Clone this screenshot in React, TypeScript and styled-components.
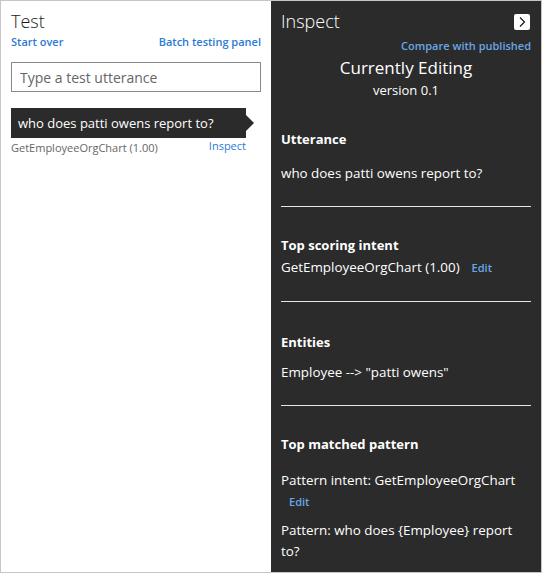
import React from "react";
import styled, { createGlobalStyle } from "styled-components";

const Global = createGlobalStyle`
  html, body { margin: 0; padding: 0; background: #fff; }
  body { font-family: "Open Sans", "Noto Sans", sans-serif; }
  * { box-sizing: border-box; }
`;

const Frame = styled.div`
  width: 542px;
  height: 573px;
  border: 1px solid #c6c6c6;
  display: flex;
  overflow: hidden;
`;

const LeftPanel = styled.section`
  width: 270px;
  background: #fff;
  padding: 8px 10px 0 10px;
  display: flex;
  flex-direction: column;
`;

const RightPanel = styled.section`
  width: 270px;
  background: #2b2b2b;
  color: #fff;
  padding: 8px 10px 0 10px;
  display: flex;
  flex-direction: column;
`;

const Title = styled.h1<{ $dark?: boolean }>`
  margin: 0;
  font-size: 18px;
  line-height: 24px;
  font-weight: 300;
  color: ${(p) => (p.$dark ? "#fff" : "#1b1b1b")};
`;

const LinkRow = styled.div`
  margin-top: 2px;
  display: flex;
  justify-content: space-between;
`;

const Link = styled.a<{ $dark?: boolean; $weight?: number }>`
  font-size: 11px;
  line-height: 14px;
  font-weight: ${(p) => p.$weight ?? 600};
  color: ${(p) => (p.$dark ? "#6aa7e6" : "#2b7bd6")};
  text-decoration: none;
  cursor: pointer;
`;

const Input = styled.input`
  margin-top: 13px;
  height: 30px;
  width: 100%;
  border: 1px solid #8a8a8a;
  padding: 0 8px;
  font-family: inherit;
  font-size: 14px;
  color: #333;
  outline: none;
  &::placeholder { color: #666; }
`;

const Bubble = styled.div`
  position: relative;
  margin-top: 16px;
  width: 235px;
  height: 30px;
  background: #2b2b2b;
  color: #fff;
  font-size: 13px;
  display: flex;
  align-items: center;
  padding-left: 7px;
  &::after {
    content: "";
    position: absolute;
    right: -8px;
    top: 7px;
    border-top: 8px solid transparent;
    border-bottom: 8px solid transparent;
    border-left: 8px solid #2b2b2b;
  }
`;

const MetaRow = styled.div`
  width: 235px;
  display: flex;
  justify-content: space-between;
  align-items: flex-start;
  margin-top: 1px;
`;

const Meta = styled.span`
  font-size: 11px;
  line-height: 14px;
  margin-top: 2px;
  color: #666;
`;

const HeaderRow = styled.div`
  display: flex;
  justify-content: space-between;
  align-items: flex-start;
`;

const CloseButton = styled.button`
  margin-top: 5px;
  margin-right: 1px;
  width: 16px;
  height: 16px;
  border: none;
  border-radius: 2px;
  background: #fff;
  padding: 0;
  display: flex;
  align-items: center;
  justify-content: center;
  cursor: pointer;
`;

const CompareRow = styled.div`
  margin-top: 6px;
  display: flex;
  justify-content: flex-end;
`;

const Centered = styled.div<{ $size: number; $lh: number; $mt: number }>`
  text-align: center;
  font-size: ${(p) => p.$size}px;
  line-height: ${(p) => p.$lh}px;
  margin-top: ${(p) => p.$mt}px;
`;

const Heading = styled.h2<{ $mt: number }>`
  margin: ${(p) => p.$mt}px 0 0 0;
  font-size: 13px;
  line-height: 20px;
  font-weight: 700;
`;

const Body = styled.p<{ $mt: number }>`
  margin: ${(p) => p.$mt}px 0 0 0;
  font-size: 13.4px;
  line-height: 21px;
`;

const InlineEdit = styled(Link)`
  margin-left: 12px;
`;

const EditLine = styled.div<{ $mt: number }>`
  margin-top: ${(p) => p.$mt}px;
  padding-left: 8px;
  line-height: 14px;
`;

const Rule = styled.hr<{ $mt: number }>`
  margin: ${(p) => p.$mt}px 0 0 0;
  border: none;
  border-top: 1px solid #e6e6e6;
  height: 0;
`;

export default function App() {
  return (
    <>
      <Global />
      <Frame>
        <LeftPanel>
          <Title>Test</Title>
          <LinkRow>
            <Link>Start over</Link>
            <Link>Batch testing panel</Link>
          </LinkRow>
          <Input placeholder="Type a test utterance" />
          <Bubble>who does patti owens report to?</Bubble>
          <MetaRow>
            <Meta>GetEmployeeOrgChart (1.00)</Meta>
            <Link $weight={400}>Inspect</Link>
          </MetaRow>
        </LeftPanel>
        <RightPanel>
          <HeaderRow>
            <Title $dark>Inspect</Title>
            <CloseButton aria-label="Close">
              <svg width="10" height="12" viewBox="0 0 10 12">
                <path d="M3 1.5 L7.5 6 L3 10.5" fill="none" stroke="#111" strokeWidth="1.1" />
              </svg>
            </CloseButton>
          </HeaderRow>
          <CompareRow>
            <Link $dark>Compare with published</Link>
          </CompareRow>
          <Centered $size={17} $lh={22} $mt={4}>Currently Editing</Centered>
          <Centered $size={13} $lh={18} $mt={2}>version 0.1</Centered>

          <Heading $mt={30}>Utterance</Heading>
          <Body $mt={14}>who does patti owens report to?</Body>
          <Rule $mt={22} />

          <Heading $mt={28}>Top scoring intent</Heading>
          <Body $mt={2}>
            GetEmployeeOrgChart (1.00)
            <InlineEdit $dark>Edit</InlineEdit>
          </Body>
          <Rule $mt={23} />

          <Heading $mt={30}>Entities</Heading>
          <Body $mt={10}>Employee --&gt; "patti owens"</Body>
          <Rule $mt={22} />

          <Heading $mt={28}>Top matched pattern</Heading>
          <Body $mt={16}>Pattern intent: GetEmployeeOrgChart</Body>
          <EditLine $mt={2}>
            <Link $dark>Edit</Link>
          </EditLine>
          <Body $mt={11}>Pattern: who does {"{Employee}"} report to?</Body>
        </RightPanel>
      </Frame>
    </>
  );
}
